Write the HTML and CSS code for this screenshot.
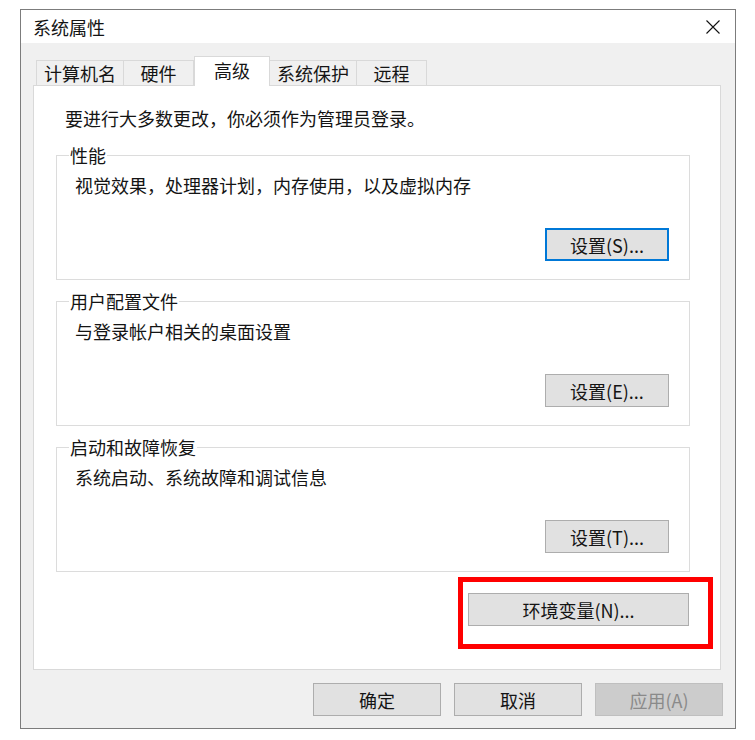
FILE: index.html
```html
<!DOCTYPE html>
<html lang="zh-CN">
<head>
<meta charset="utf-8">
<title>系统属性</title>
<link rel="stylesheet" href="styles.css">
</head>
<body>
<div class="window">
  <div class="titlebar">
    <span class="title">系统属性</span>
    <svg class="close" width="14" height="14" viewBox="0 0 14 14"><path d="M0.5 0.5 L13.5 13.5 M13.5 0.5 L0.5 13.5" stroke="#111" stroke-width="1.1" fill="none"/></svg>
  </div>
  <div class="body">
    <div class="tabs">
      <div class="tab">计算机名</div>
      <div class="tab">硬件</div>
      <div class="tab active">高级</div>
      <div class="tab">系统保护</div>
      <div class="tab">远程</div>
    </div>
    <div class="panel">
      <p class="intro">要进行大多数更改，你必须作为管理员登录。</p>
      <fieldset class="group first">
        <legend>性能</legend>
        <div class="desc">视觉效果，处理器计划，内存使用，以及虚拟内存</div>
        <div class="actions"><button class="btn focused">设置(S)...</button></div>
      </fieldset>
      <fieldset class="group">
        <legend>用户配置文件</legend>
        <div class="desc">与登录帐户相关的桌面设置</div>
        <div class="actions"><button class="btn">设置(E)...</button></div>
      </fieldset>
      <fieldset class="group">
        <legend>启动和故障恢复</legend>
        <div class="desc">系统启动、系统故障和调试信息</div>
        <div class="actions"><button class="btn">设置(T)...</button></div>
      </fieldset>
      <div class="env-row">
        <div class="highlight"><button class="btn env">环境变量(N)...</button></div>
      </div>
    </div>
    <div class="footer">
      <button class="btn wide">确定</button>
      <button class="btn wide">取消</button>
      <button class="btn wide disabled">应用(A)</button>
    </div>
  </div>
</div>
</body>
</html>
```

FILE: styles.css
```css
* { box-sizing: border-box; }
body {
  margin: 0;
  background: #fff;
  font-family: "Noto Sans CJK SC", "Noto Sans", sans-serif;
  font-size: 18px;
  color: #141414;
}
.window {
  width: 716px;
  margin: 9px 0 0 20px;
  border: 1px solid #7c7c7c;
  background: #f0f0f0;
}
.titlebar {
  height: 33px;
  background: #fff;
  display: flex;
  align-items: center;
  justify-content: space-between;
  padding: 0 15px 0 12px;
}
.title { line-height: 24px; }
.close { display: block; }
.body {
  padding: 13px 14px 12px 12px;
}
.tabs {
  display: flex;
  align-items: flex-end;
  height: 29px;
  margin-left: 3px;
}
.tab {
  height: 25px;
  min-width: 70px;
  padding: 0 7px;
  border: 1px solid #d9d9d9;
  border-bottom: none;
  background: #f0f0f0;
  display: flex;
  align-items: center;
  justify-content: center;
  line-height: 22px;
  white-space: nowrap;
}
.tab + .tab { border-left: none; }
.tab.active {
  height: 30px;
  min-width: 76px;
  margin-bottom: -1px;
  background: #fff;
  border-left: 1px solid #d9d9d9;
  padding-bottom: 4px;
}
.tab.active + .tab { border-left: none; }
.panel {
  background: #fff;
  border: 1px solid #d9d9d9;
  padding: 20px 0 20px 22px;
}
.intro {
  margin: 0 0 0 9px;
  line-height: 24px;
}
.group {
  margin: 11px 30px 0 0;
  padding: 9px 20px 18px 18px;
  border: 1px solid #dcdcdc;
  min-width: 0;
}
.group.first { margin-top: 15px; }
.group legend {
  line-height: 20px;
  padding: 0 1px;
  margin-left: -6px;
}
.desc { line-height: 22px; }
.actions {
  display: flex;
  justify-content: flex-end;
  margin-top: 32px;
}
.btn {
  font: inherit;
  font-size: 18px;
  color: #141414;
  height: 33px;
  width: 124px;
  background: #e1e1e1;
  border: 1px solid #adadad;
  padding: 0;
  line-height: 20px;
}
.btn.focused { border: 2px solid #0078d7; }
.env-row {
  display: flex;
  justify-content: flex-end;
  margin-top: 5px;
  padding-right: 7px;
}
.highlight {
  border: 5px solid #ff0000;
  padding: 11px 19px 18px 5px;
}
.btn.env { width: 221px; }
.footer {
  display: flex;
  justify-content: flex-end;
  gap: 13px;
  padding-top: 13px;
  margin-right: -2px;
}
.btn.wide { width: 128px; }
.btn.disabled {
  background: #cccccc;
  border-color: #bfbfbf;
  color: #8a8a8a;
}
```
